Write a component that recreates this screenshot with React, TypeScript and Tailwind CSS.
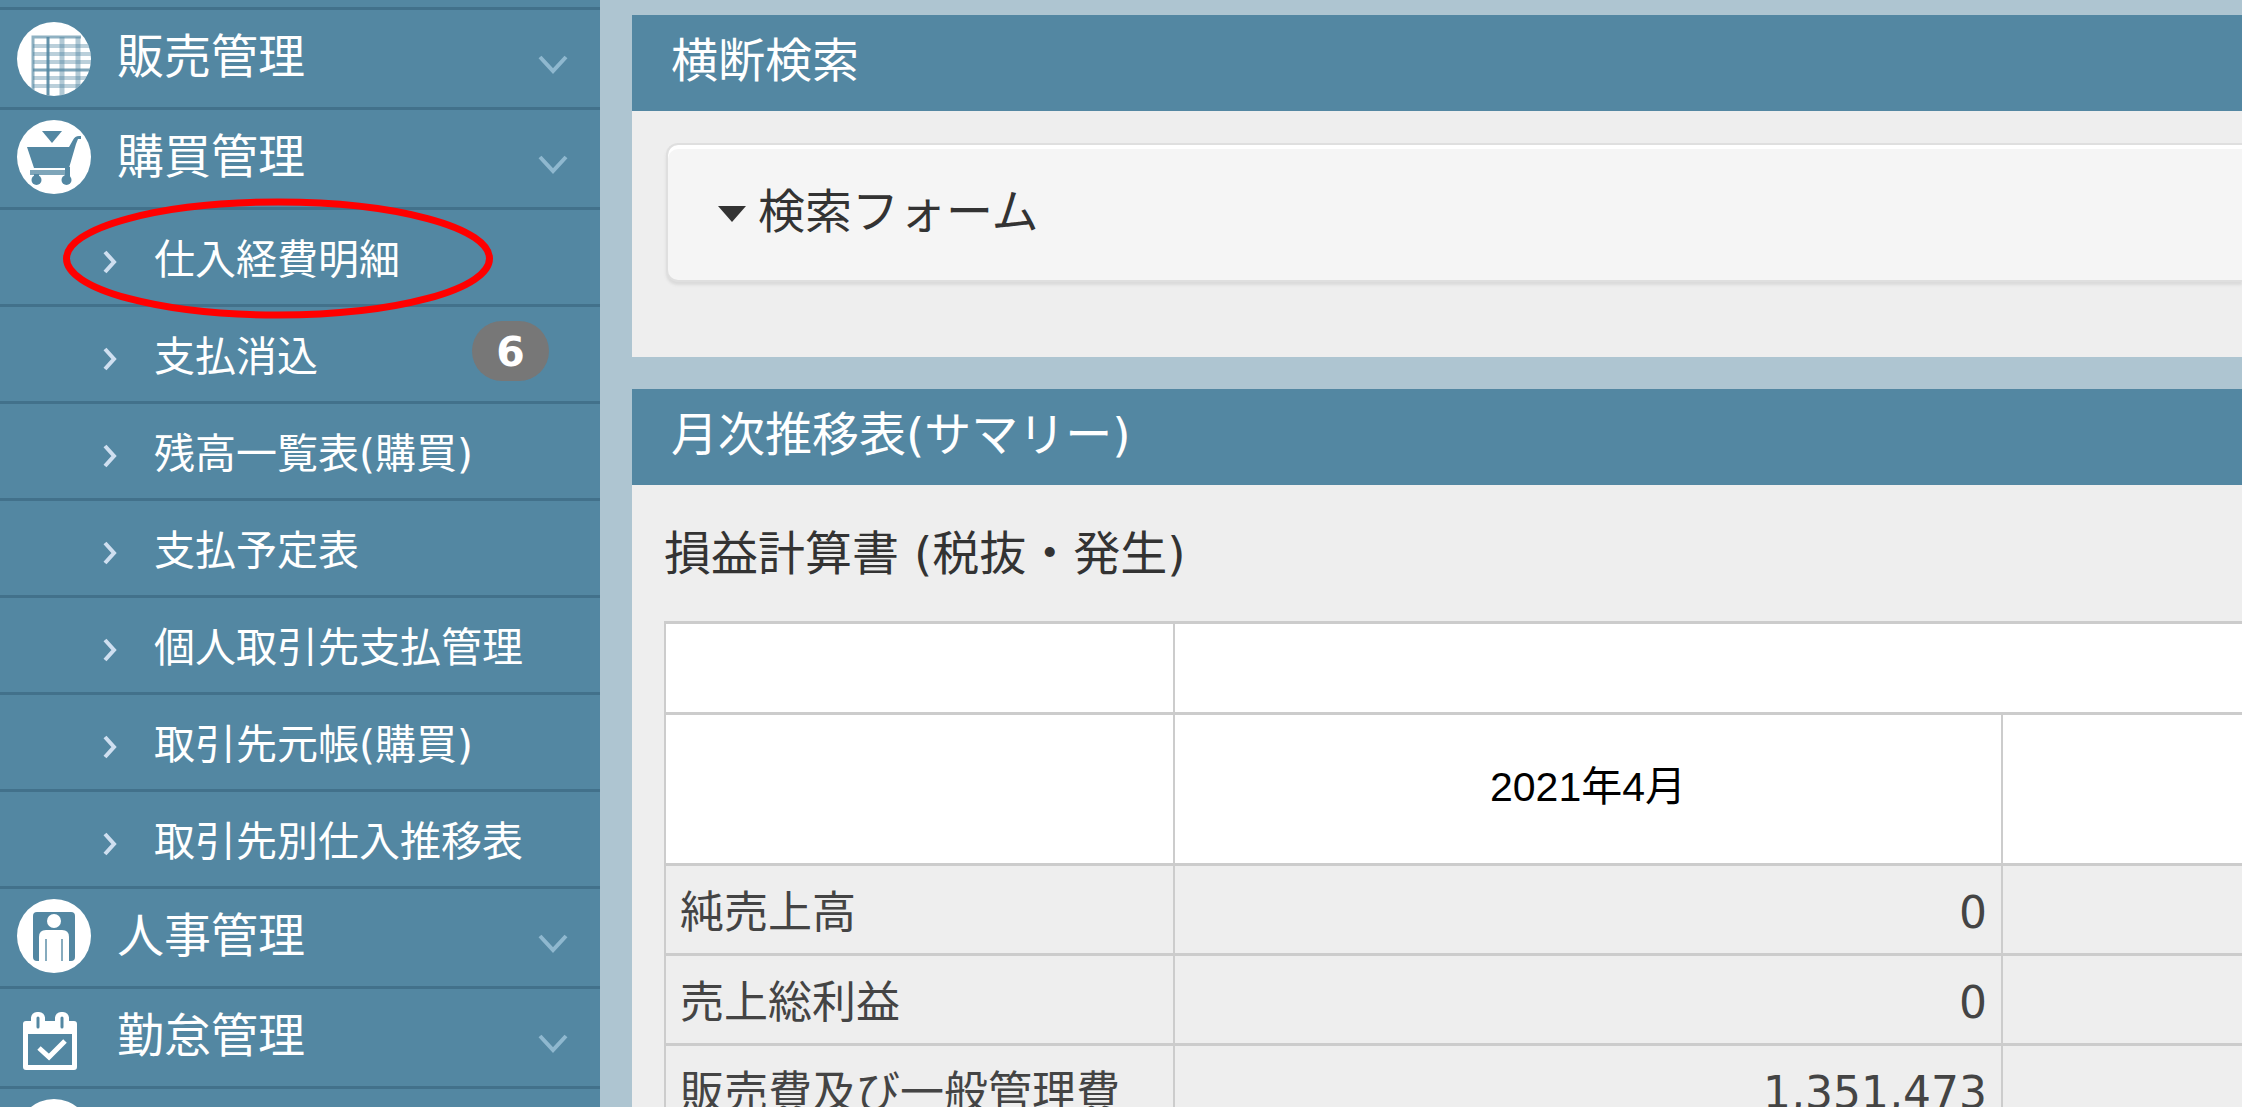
import { useState } from 'react'
import type { ReactNode } from 'react'

interface MenuItem {
    label: string
    badge?: number
}

interface MenuGroup {
    label: string
    icon: ReactNode
    items?: MenuItem[]
}

const groups: MenuGroup[] = [
    { label: '販売管理', icon: <SalesIcon /> },
    {
        label: '購買管理',
        icon: <CartIcon />,
        items: [
            { label: '仕入経費明細' },
            { label: '支払消込', badge: 6 },
            { label: '残高一覧表(購買)' },
            { label: '支払予定表' },
            { label: '個人取引先支払管理' },
            { label: '取引先元帳(購買)' },
            { label: '取引先別仕入推移表' },
        ],
    },
    { label: '人事管理', icon: <PersonIcon /> },
    { label: '勤怠管理', icon: <CalendarIcon /> },
    { label: '', icon: <DiscIcon /> },
]

const rows = [
    { name: '純売上高', value: '0' },
    { name: '売上総利益', value: '0' },
    { name: '販売費及び一般管理費', value: '1,351,473' },
]

export default function App() {
    return (
        <div className="flex h-screen overflow-hidden bg-[#aec5d1] font-['DejaVu_Sans','Noto_Sans_CJK_JP',sans-serif] text-[#333]">
            <Sidebar />
            <main className="flex min-w-0 flex-1 flex-col gap-8 pl-8 pt-[15px]">
                <Panel title="横断検索">
                    <div className="pb-[75px] pl-[34px] pt-8">
                        <SearchForm />
                    </div>
                </Panel>
                <Panel title="月次推移表(サマリー)">
                    <div className="pl-8 pt-[34px]">
                        <h3 className="mb-8 text-[47px] leading-[70px]">損益計算書 (税抜・発生)</h3>
                        <SummaryTable />
                    </div>
                </Panel>
            </main>
        </div>
    )
}

function Sidebar() {
    return (
        <nav className="relative w-[600px] shrink-0 bg-[#5387a2] text-white">
            <div className="h-[10px] border-b-[3px] border-[#42718b]" />
            <ul>
                {groups.map((group, i) => (
                    <li key={i}>
                        <a href="#" aria-label={group.label || undefined} className="flex h-[100px] items-center border-b-[3px] border-[#42718b] pb-1 pl-4 pr-8">
                            <span className="w-[101px] shrink-0">{group.icon}</span>
                            <span className="flex-1 text-[47px] leading-[70px]">{group.label}</span>
                            {group.label && <Chevron />}
                        </a>
                        {group.items && (
                            <ul>
                                {group.items.map(item => (
                                    <SubItem key={item.label} item={item} />
                                ))}
                            </ul>
                        )}
                    </li>
                ))}
            </ul>
            {/* Highlight around the first sub item */}
            <svg className="pointer-events-none absolute left-[62px] top-[198px]" width="432" height="121" viewBox="0 0 432 121" fill="none">
                <ellipse cx="216" cy="60.5" rx="211.5" ry="56.5" stroke="#ff0000" strokeWidth="7" />
            </svg>
        </nav>
    )
}

function SubItem({ item }: { item: MenuItem }) {
    return (
        <li>
            <a href="#" className="flex h-[97px] items-center border-b-[3px] border-[#42718b] pl-[102px] pr-[51px] pt-1.5">
                <svg className="mt-1 shrink-0" width="16" height="24" viewBox="0 0 16 24" fill="none">
                    <path d="M3 2 L12 12 L3 22" stroke="#cfdff0" strokeWidth="4" />
                </svg>
                <span className="ml-9 flex-1 whitespace-nowrap text-[41px] leading-[60px]">{item.label}</span>
                {item.badge && (
                    <span className="mb-3 h-[60px] w-[77px] rounded-full bg-[#777] text-center text-[41px] font-bold leading-[62px]">
                        {item.badge}
                    </span>
                )}
            </a>
        </li>
    )
}

function Panel({ title, children }: { title: string; children: ReactNode }) {
    return (
        <section className="bg-[#eee]">
            <h2 className="flex h-24 items-center bg-[#5387a2] pb-1 pl-[39px] text-[47px] leading-[70px] text-white">{title}</h2>
            {children}
        </section>
    )
}

function SearchForm() {
    const [open, setOpen] = useState(false)

    return (
        <button
            type="button"
            aria-expanded={open}
            onClick={() => setOpen(!open)}
            className="flex h-[139px] w-full items-center rounded-l-xl border-y-2 border-l-2 border-[#dfdfdf] bg-[#f5f5f5] pb-0.5 pl-[50px] text-left shadow-[0_3px_3px_#dadada,inset_0_4px_0_#fff]"
        >
            <svg className="mt-1" width="28" height="16" viewBox="0 0 28 16">
                <path d="M0 0 H28 L14 16 Z" fill="#333" />
            </svg>
            <span className="ml-3 text-[47px] leading-[70px]">検索フォーム</span>
        </button>
    )
}

function SummaryTable() {
    return (
        <table className="w-full table-fixed border-collapse border-y-[3px] border-l-2 border-[#ccc] text-[44px] leading-[66px] text-[#444]">
            <colgroup>
                <col className="w-[509px]" />
                <col className="w-[828px]" />
                <col />
            </colgroup>
            <thead className="bg-white">
                <tr className="h-[91px]">
                    <td className="border-y-[3px] border-r-2 border-[#ccc]" />
                    <td colSpan={2} className="border-y-[3px] border-[#ccc]" />
                </tr>
                <tr className="h-[151px]">
                    <td className="border-y-[3px] border-r-2 border-[#ccc]" />
                    <th className="border-y-[3px] border-r-2 border-[#ccc] pb-1 font-['Liberation_Sans','Noto_Sans_CJK_JP',sans-serif] text-[41px] font-normal text-black">
                        2021年4月
                    </th>
                    <td className="border-y-[3px] border-[#ccc]" />
                </tr>
            </thead>
            <tbody>
                {rows.map(row => (
                    <tr key={row.name} className="h-[90px]">
                        <th className="whitespace-nowrap border-y-[3px] border-r-2 border-[#ccc] pl-[14px] pt-1.5 text-left font-normal">{row.name}</th>
                        <td className="border-y-[3px] border-r-2 border-[#ccc] pr-[14px] pt-1.5 text-right">{row.value}</td>
                        <td className="border-y-[3px] border-[#ccc]" />
                    </tr>
                ))}
            </tbody>
        </table>
    )
}

function Chevron() {
    return (
        <svg className="mt-4 shrink-0" width="30" height="20" viewBox="0 0 30 20" fill="none">
            <path d="M2 2 L15 16 L28 2" stroke="#8fb8cf" strokeWidth="4" />
        </svg>
    )
}

function DiscIcon() {
    return (
        <svg width="76" height="76" viewBox="0 0 76 76">
            <circle cx="38" cy="38" r="37" fill="#fff" />
        </svg>
    )
}

function SalesIcon() {
    return (
        <svg className="mt-1" width="76" height="76" viewBox="0 0 76 76">
            <defs>
                <clipPath id="sales-disc">
                    <circle cx="38" cy="38" r="37" />
                </clipPath>
            </defs>
            <circle cx="38" cy="38" r="37" fill="#fff" />
            <g clipPath="url(#sales-disc)" stroke="#5387a2">
                <path d="M17 76 V16 H65" fill="none" strokeWidth="3" strokeOpacity="0.65" />
                <path d="M32 16 V76" strokeWidth="3" strokeOpacity="0.9" />
                <path d="M46 16 V76 M62 16 V76" strokeWidth="5" strokeOpacity="0.45" />
                <path d="M17 25 H76 M17 33 H76 M17 41 H76 M17 57 H76 M17 65 H76" strokeWidth="4" strokeOpacity="0.4" />
                <path d="M17 49 H76" strokeWidth="3" strokeOpacity="0.75" />
            </g>
        </svg>
    )
}

function CartIcon() {
    return (
        <svg width="76" height="76" viewBox="0 0 76 76">
            <circle cx="38" cy="38" r="37" fill="#fff" />
            <g fill="#5387a2">
                <path d="M26 12 H46 L36 24 Z" />
                <path d="M11 28 H53 L57 21 Q59 17 63 17 H65 V20 H62 L60 25 L53 49 H18 Z" />
                <path d="M14 51 H54 V56 H14 Z" fillOpacity="0.75" />
                <path d="M18 55 H23 V60 H18 Z M49 48 H54 V60 H49 Z" />
                <circle cx="20.5" cy="61" r="5" />
                <circle cx="50.5" cy="61" r="5" />
            </g>
        </svg>
    )
}

function PersonIcon() {
    return (
        <svg width="76" height="76" viewBox="0 0 76 76">
            <circle cx="38" cy="38" r="37" fill="#fff" />
            <rect x="17" y="14" width="42" height="49" rx="4" fill="#5387a2" />
            <circle cx="38" cy="23" r="7" fill="#fff" />
            <path d="M23 64 V39 Q23 32 30 32 H46 Q53 32 53 39 V64 Z" fill="#fff" />
            <path d="M30 41 V63 M46 41 V63" stroke="#5387a2" strokeWidth="2" strokeOpacity="0.7" />
        </svg>
    )
}

function CalendarIcon() {
    return (
        <svg className="ml-[6px] mt-3" width="56" height="60" viewBox="0 0 56 60" fill="none">
            <path d="M4 9 H52 Q55 9 55 12 V55 Q55 58 52 58 H4 Q1 58 1 55 V12 Q1 9 4 9 Z M6 22 V53 H50 V22 Z" fill="#fff" fillRule="evenodd" />
            <rect x="9" y="0" width="14" height="19" rx="6" fill="#fff" />
            <rect x="33" y="0" width="14" height="19" rx="6" fill="#fff" />
            <path d="M16 6 V15 M40 6 V15" stroke="#5387a2" strokeWidth="3" strokeLinecap="round" />
            <path d="M17 36 L27 45 L43 29" stroke="#fff" strokeWidth="5" />
        </svg>
    )
}
